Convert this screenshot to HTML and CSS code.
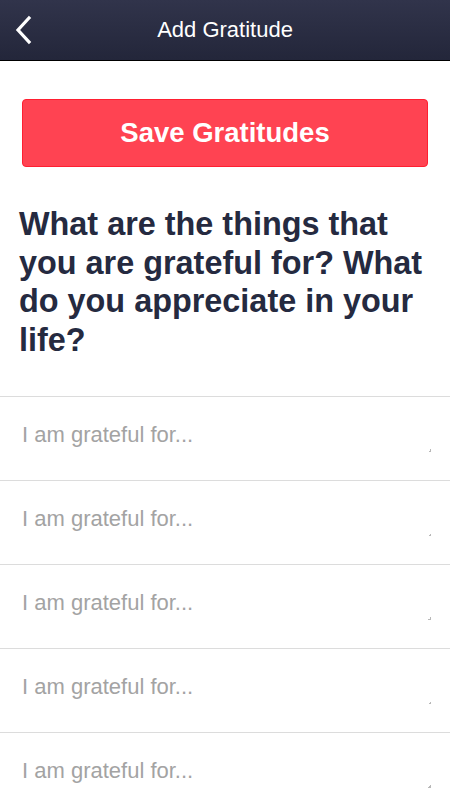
FILE: index.html
```html
<!DOCTYPE html>
<html>
<head>
<meta charset="utf-8">
<link rel="stylesheet" href="styles.css">
</head>
<body>
<header class="topbar">
  <div class="back">
    <svg width="20" height="30" viewBox="0 0 20 30"><path d="M15 3 L4 15 L15 27" fill="none" stroke="#fff" stroke-width="3.2" stroke-linecap="square"/></svg>
  </div>
  <div class="title">Add Gratitude</div>
</header>
<main>
  <div class="btn-wrap"><button class="save">Save Gratitudes</button></div>
  <h1 class="question">What are the things that you are grateful for? What do you appreciate in your life?</h1>
  <div class="list">
    <div class="row"><textarea class="entry" placeholder="I am grateful for..."></textarea><span class="grip"></span></div>
    <div class="row"><textarea class="entry" placeholder="I am grateful for..."></textarea><span class="grip"></span></div>
    <div class="row"><textarea class="entry" placeholder="I am grateful for..."></textarea><span class="grip"></span></div>
    <div class="row"><textarea class="entry" placeholder="I am grateful for..."></textarea><span class="grip"></span></div>
    <div class="row"><textarea class="entry" placeholder="I am grateful for..."></textarea><span class="grip"></span></div>
  </div>
</main>
</body>
</html>
```
FILE: styles.css
```css
* { box-sizing: border-box; }
html, body { margin: 0; padding: 0; background: #fff; }
body { font-family: "Liberation Sans", Arial, sans-serif; overflow: hidden; height: 800px; }
.topbar {
  height: 61px;
  background: linear-gradient(#31344b, #23263a);
  border-bottom: 1px solid #000;
  display: flex;
  align-items: center;
  justify-content: center;
  position: relative;
}
.back { position: absolute; left: 14px; top: 15px; width: 20px; height: 30px; }
.back svg { display: block; }
.title { color: #fff; font-size: 22px; line-height: 26px; margin-top: -1px; }
.btn-wrap { padding: 38px 22px 0 22px; }
.save {
  display: block;
  width: 100%;
  height: 68px;
  background: #ff4352;
  border: 1px solid #ff1f31;
  border-radius: 4px;
  color: #fff;
  font-family: "Liberation Sans", Arial, sans-serif;
  font-weight: bold;
  font-size: 27.5px;
  padding: 0;
}
.question {
  margin: 38px 0 0 0;
  padding: 0 18px 0 19px;
  font-size: 32.4px;
  line-height: 38.5px;
  font-weight: bold;
  color: #252a40;
}
.list { margin-top: 37px; }
.row {
  position: relative;
  height: 84px;
  border-top: 1px solid #dcdcdc;
  padding: 25px 18px 0 22px;
}
.entry {
  display: block;
  width: 100%;
  height: 30px;
  border: none;
  outline: none;
  resize: none;
  padding: 0;
  margin: 0;
  font-family: "Liberation Sans", Arial, sans-serif;
  font-size: 22px;
  line-height: 25px;
  color: #333;
  background: transparent;
}
.entry::placeholder { color: #a3a3a3; }
.grip {
  position: absolute;
  left: 428px;
  top: 52px;
  width: 3px;
  height: 3px;
  background: linear-gradient(135deg, transparent 50%, #b8b8b8 50%);
}
```
